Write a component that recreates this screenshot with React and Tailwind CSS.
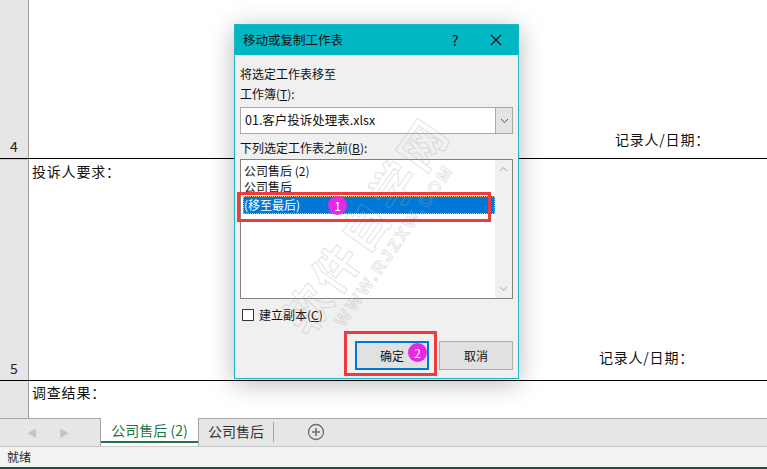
import { useState } from "react"

const cjk = { fontFamily: '"Noto Sans CJK SC", "Noto Sans", sans-serif' }

const Sheet = () => (
  <div className="flex flex-col h-[418px] bg-white text-[14px] tracking-[0.8px] text-[#111]">
    <div className="flex h-[159px] border-b border-black">
      <div className="w-[29px] shrink-0 bg-[#e6e6e6] border-r border-[#9c9c9c] flex items-end justify-center pb-[1px] tracking-normal text-[#222]">
        4
      </div>
      <div className="flex-1 flex items-end justify-end pr-[57px] pb-[8px]">记录人/日期：</div>
    </div>
    <div className="flex h-[222px] border-b border-black">
      <div className="w-[29px] shrink-0 bg-[#e6e6e6] border-r border-[#9c9c9c] border-t border-t-[#c8c8c8] flex flex-col justify-end items-center pb-[1px] tracking-normal text-[#222]">
        5
      </div>
      <div className="flex-1 flex flex-col justify-between pl-[3px] pt-[2px]">
        <div>投诉人要求：</div>
        <div className="self-end pr-[73px] pb-[12px]">记录人/日期：</div>
      </div>
    </div>
    <div className="flex flex-1">
      <div className="w-[29px] shrink-0 bg-[#e6e6e6] border-r border-[#9c9c9c]"></div>
      <div className="flex-1 pl-[3px] pt-[1px]">调查结果：</div>
    </div>
  </div>
)

const TabBar = () => (
  <div className="relative h-[28px] bg-[#e6e6e6] flex items-stretch text-[14px]">
    <div className="absolute left-0 right-0 top-0 h-px bg-[#a6a6a6]"></div>
    <div className="w-[100px] flex items-center gap-[22px] pl-[27px] text-[#c4c4c4] text-[10px]">
      <span>◀</span>
      <span>▶</span>
    </div>
    <div className="relative w-[99px] bg-white border-x border-[#a6a6a6] flex items-center justify-center text-[#217346] pb-[3px]">
      公司售后 (2)
      <div className="absolute left-0 right-0 bottom-[3px] h-[2px] bg-[#217346]"></div>
    </div>
    <div className="w-[74px] flex items-center justify-center text-[#333] pt-px pb-[3px]">公司售后</div>
    <div className="w-px bg-[#a6a6a6] my-[4px]"></div>
    <div className="flex items-center pl-[33px] pb-[1px]">
      <svg width="18" height="18" viewBox="0 0 18 18">
        <circle cx="9" cy="9" r="7.5" fill="none" stroke="#6e6e6e" strokeWidth="1.3" />
        <path d="M9 5v8M5 9h8" stroke="#6e6e6e" strokeWidth="1.6" />
      </svg>
    </div>
  </div>
)

const StatusBar = () => (
  <div className="h-[23px] bg-[#f3f3f3] border-t border-[#c6c6c6] flex flex-col">
    <div className="flex-1 pl-[7px] text-[12px] text-[#222] flex items-center">就绪</div>
    <div className="h-[2px] bg-[#1e4d4c]"></div>
  </div>
)

const Badge = ({ n }) => (
  <div className="w-[19px] h-[19px] rounded-full bg-[#e629e3] text-white text-[12px] flex items-center justify-center leading-none">
    {n}
  </div>
)

const Dialog = () => {
  const [copy, setCopy] = useState(false)
  const items = ["公司售后 (2)", "公司售后", "(移至最后)"]
  return (
    <div className="absolute left-[234px] top-[24px] w-[285px] h-[355px] bg-[#f0f0f0] border border-[#1fb7c6] shadow-[0_4px_24px_rgba(0,0,0,0.28)] flex flex-col text-[12px] text-[#111]">
      <div className="h-[30px] bg-[#00b7c3] flex items-center pl-[8px] text-[12.5px] text-[#111]">
        <span className="flex-1">移动或复制工作表</span>
        <span className="w-[20px] text-center text-[14px] mr-[25px]">?</span>
        <svg width="12" height="12" viewBox="0 0 12 12" className="mr-[16px]">
          <path d="M1 1l10 10M11 1L1 11" stroke="#111" strokeWidth="1.2" />
        </svg>
      </div>
      <div className="relative flex-1 flex flex-col px-[5px] pt-[9px]">
        <div className="h-[20px] flex items-center">将选定工作表移至</div>
        <div className="h-[20px] flex items-center">
          工作簿(<span className="underline">T</span>):
        </div>
        <div className="mt-[3px] h-[27px] flex bg-white border border-[#a8a8a8]">
          <div className="flex-1 flex items-center pl-[4px] text-[12.5px]">01.客户投诉处理表.xlsx</div>
          <div className="w-[17px] bg-[#e3e3e3] border-l border-[#a8a8a8] flex items-center justify-center">
            <svg width="9" height="6" viewBox="0 0 9 6">
              <path d="M1 1l3.5 3.5L8 1" fill="none" stroke="#555" strokeWidth="1" />
            </svg>
          </div>
        </div>
        <div className="mt-[4px] h-[20px] flex items-center">
          下列选定工作表之前(<span className="underline">B</span>):
        </div>
        <div className="mt-px h-[140px] bg-white border border-[#828282] flex">
          <div className="flex-1 pt-[3px] pl-[2px]">
            {items.map((it, i) => (
              <div
                key={i}
                className={`flex items-center pl-[1px] ${
                  i === 2
                    ? "h-[18px] bg-[#0078d7] text-white outline-1 outline-dotted outline-[#f0c070] -outline-offset-1 mt-[1px]"
                    : "h-[16px]"
                }`}
              >
                {it}
              </div>
            ))}
          </div>
          <div className="w-[17px] bg-[#f0f0f0] flex flex-col items-center justify-between py-[6px]">
            <svg width="9" height="6" viewBox="0 0 9 6">
              <path d="M1 5l3.5-3.5L8 5" fill="none" stroke="#c2c2c2" strokeWidth="1.2" />
            </svg>
            <svg width="9" height="6" viewBox="0 0 9 6">
              <path d="M1 1l3.5 3.5L8 1" fill="none" stroke="#c2c2c2" strokeWidth="1.2" />
            </svg>
          </div>
        </div>
        <div className="mt-[8px] h-[16px] flex items-center pl-[2px] gap-[5px]">
          <button
            onClick={() => setCopy(!copy)}
            className="w-[12px] h-[12px] bg-white border border-[#333]"
          ></button>
          <span>
            建立副本(<span className="underline">C</span>)
          </span>
        </div>
        <div className="mt-[18px] flex justify-end gap-[10px]">
          <button className="w-[74px] h-[29px] bg-[#e1e1e1] border-2 border-[#0078d7] text-[12px]">确定</button>
          <button className="w-[74px] h-[29px] bg-[#e1e1e1] border border-[#adadad] text-[12px]">取消</button>
        </div>

        {/* watermark */}
        <div className="pointer-events-none absolute left-[-10px] top-[140px] w-[300px] -rotate-[55deg] flex flex-col items-center text-transparent [-webkit-text-stroke:1px_rgba(170,170,170,0.35)]">
          <div className="text-[46px] font-bold tracking-[4px] leading-none">软件自学网</div>
          <div className="text-[17px] font-bold tracking-[3px] mt-[2px]" style={{ fontFamily: '"Liberation Sans", sans-serif' }}>
            WWW.RJZXW.COM
          </div>
        </div>

        {/* annotations */}
        <div className="absolute left-[2px] top-[137px] w-[254px] h-[30px] border-[3px] border-[#ef3b3f]"></div>
        <div className="absolute left-[93px] top-[141px]">
          <Badge n="1" />
        </div>
        <div className="absolute left-[109px] top-[276px] w-[93px] h-[45px] border-[3px] border-[#ef3b3f]"></div>
        <div className="absolute left-[173px] top-[288px]">
          <Badge n="2" />
        </div>
      </div>
    </div>
  )
}

export default function App() {
  return (
    <div className="relative w-[767px] h-[469px] overflow-hidden bg-white" style={cjk}>
      <Sheet />
      <TabBar />
      <StatusBar />
      <Dialog />
    </div>
  )
}
